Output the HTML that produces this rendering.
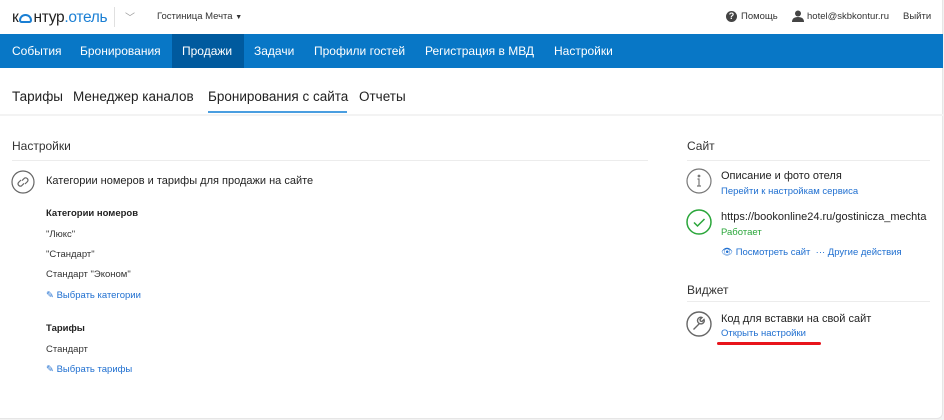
<!DOCTYPE html>
<html><head><meta charset="utf-8"><style>
*{margin:0;padding:0;box-sizing:border-box}
body{width:944px;height:420px;overflow:hidden;background:#f2f2f2;font-family:"Liberation Sans",sans-serif;color:#222;position:relative}
.a{position:absolute;white-space:nowrap}
.page{position:absolute;left:0;top:0;width:943px;height:419px;background:#fff;border-right:1px solid #e6e6e6;border-bottom:1px solid #e6e6e6;border-bottom-right-radius:6px}
.nav{position:absolute;left:0;top:34px;width:943px;height:34px;background:#0877c6}
.nav span{position:absolute;top:10px;color:#fff;font-size:12px}
.lnk{color:#1f6fd0;font-size:9.5px}
.t{font-size:11px;color:#222}
.s{font-size:9.5px;color:#333}
</style></head><body>
<div class="page"></div>
<div class="a" style="left:12px;top:9px;font-size:15.5px;color:#222;letter-spacing:-0.3px">к<span style="display:inline-block;width:13px;height:9px;border:2px solid #1a7fd4;border-radius:7px 7px 3px 3px;vertical-align:-1px;margin:0 1px"></span>нтур<span style="color:#1a7fd4">.отель</span></div>
<div class="a" style="left:114px;top:7px;width:1px;height:20px;background:#e0e0e0"></div>
<div class="a" style="left:125px;top:9px;font-size:10px;color:#999">﹀</div>
<div class="a" style="left:157px;top:11px;font-size:9.5px;color:#333">Гостиница Мечта <span style="font-size:7px">&#9660;</span></div>
<div class="a" style="left:726px;top:11px;width:11px;height:11px;border-radius:50%;background:#444;color:#fff;font-size:9px;font-weight:bold;text-align:center;line-height:11px">?</div>
<div class="a" style="left:741px;top:11px;font-size:9.5px;color:#333">Помощь</div>
<svg class="a" style="left:792px;top:10px" width="12" height="12" viewBox="0 0 12 12"><circle cx="6" cy="3.5" r="3" fill="#444"/><path d="M0 12 Q0 7 6 7 Q12 7 12 12Z" fill="#444"/></svg>
<div class="a" style="left:807px;top:11px;font-size:9.5px;color:#333">hotel@skbkontur.ru</div>
<div class="a" style="left:903px;top:11px;font-size:9.5px;color:#333">Выйти</div>
<div class="nav">
<div class="a" style="left:172px;top:0;width:72px;height:34px;background:#005a9e"></div>
<span style="left:12px">События</span><span style="left:80px">Бронирования</span><span style="left:182px">Продажи</span><span style="left:254px">Задачи</span><span style="left:314px">Профили гостей</span><span style="left:425px">Регистрация в МВД</span><span style="left:554px">Настройки</span>
</div>
<div class="a" style="left:12px;top:89px;font-size:13.5px;color:#222">Тарифы</div>
<div class="a" style="left:73px;top:89px;font-size:13.5px;color:#222">Менеджер каналов</div>
<div class="a" style="left:208px;top:89px;font-size:13.5px;color:#222">Бронирования с сайта</div>
<div class="a" style="left:359px;top:89px;font-size:13.5px;color:#222">Отчеты</div>
<div class="a" style="left:208px;top:111px;width:139px;height:2px;background:#4a9ee0"></div>
<div class="a" style="left:0;top:114px;width:943px;height:2px;background:#f3f3f3"></div>
<div class="a" style="left:12px;top:139px;font-size:12px;color:#333">Настройки</div>
<div class="a" style="left:12px;top:160px;width:636px;height:1px;background:#ececec"></div>
<svg class="a" style="left:11px;top:170px" width="24" height="24" viewBox="0 0 24 24" fill="none" stroke="#666" stroke-width="1.2"><circle cx="12" cy="12" r="11"/><path d="M10 10l-2.5 2.5a2.3 2.3 0 003.2 3.2L13 13.4M14 14l2.5-2.5a2.3 2.3 0 00-3.2-3.2L11 10.6"/></svg>
<div class="a t" style="left:46px;top:175px">Категории номеров и тарифы для продажи на сайте</div>
<div class="a" style="left:46px;top:208px;font-size:9.5px;font-weight:bold;color:#222">Категории номеров</div>
<div class="a s" style="left:46px;top:229px">"Люкс"</div>
<div class="a s" style="left:46px;top:249px">"Стандарт"</div>
<div class="a s" style="left:46px;top:269px">Стандарт "Эконом"</div>
<div class="a lnk" style="left:46px;top:290px">✎ Выбрать категории</div>
<div class="a" style="left:46px;top:323px;font-size:9.5px;font-weight:bold;color:#222">Тарифы</div>
<div class="a s" style="left:46px;top:344px">Стандарт</div>
<div class="a lnk" style="left:46px;top:364px">✎ Выбрать тарифы</div>
<div class="a" style="left:687px;top:139px;font-size:12px;color:#333">Сайт</div>
<div class="a" style="left:687px;top:160px;width:243px;height:1px;background:#ececec"></div>
<svg class="a" style="left:686px;top:168px" width="26" height="26" viewBox="0 0 26 26" fill="none" stroke="#777" stroke-width="1.2"><circle cx="13" cy="13" r="12"/><circle cx="13" cy="8" r="0.8" fill="#777"/><path d="M11.5 11h1.5v7M11 18h4"/></svg>
<div class="a t" style="left:721px;top:170px">Описание и фото отеля</div>
<div class="a lnk" style="left:721px;top:186px">Перейти к настройкам сервиса</div>
<svg class="a" style="left:686px;top:209px" width="26" height="26" viewBox="0 0 26 26" fill="none" stroke="#2aa63a" stroke-width="1.5"><circle cx="13" cy="13" r="12"/><path d="M8 13.5l3.5 3.5 7-7"/></svg>
<div class="a t" style="left:721px;top:211px">https://bookonline24.ru/gostinicza_mechta</div>
<div class="a" style="left:721px;top:227px;font-size:9.5px;color:#2aa63a">Работает</div>
<div class="a lnk" style="left:721px;top:247px">👁︎ Посмотреть сайт &nbsp;··· Другие действия</div>
<div class="a" style="left:687px;top:283px;font-size:12px;color:#333">Виджет</div>
<div class="a" style="left:687px;top:301px;width:243px;height:1px;background:#ececec"></div>
<svg class="a" style="left:686px;top:311px" width="26" height="26" viewBox="0 0 26 26" fill="none" stroke="#666" stroke-width="1.4"><circle cx="13" cy="13" r="12"/><path d="M7.5 18.5l6-6M13.5 12.5a3.2 3.2 0 004.5-4l-2 2-1.6-.4-.4-1.6 2-2a3.2 3.2 0 00-2.5 6"/></svg>
<div class="a t" style="left:721px;top:313px">Код для вставки на свой сайт</div>
<div class="a lnk" style="left:721px;top:328px">Открыть настройки</div>
<div class="a" style="left:717px;top:342px;width:104px;height:3px;background:#e8141b;border-radius:2px"></div>
</body></html>
